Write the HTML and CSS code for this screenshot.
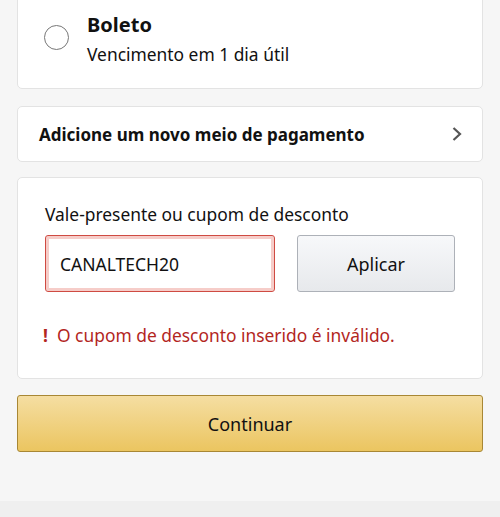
FILE: index.html
```html
<!DOCTYPE html>
<html lang="pt-BR">
<head>
<meta charset="utf-8">
<link rel="stylesheet" href="styles.css">
</head>
<body>
<div class="page">
  <div class="card card-option">
    <span class="radio"></span>
    <div class="option-text">
      <div class="option-title">Boleto</div>
      <div class="option-sub">Vencimento em 1 dia útil</div>
    </div>
  </div>

  <div class="card card-link">
    <span class="link-text">Adicione um novo meio de pagamento</span>
    <svg class="chevron" width="12" height="16" viewBox="0 0 12 16"><path d="M2.5 2 L9 8 L2.5 14" fill="none" stroke="#555" stroke-width="2.2"/></svg>
  </div>

  <div class="card card-coupon">
    <div class="coupon-label">Vale-presente ou cupom de desconto</div>
    <div class="coupon-row">
      <div class="coupon-input">CANALTECH20</div>
      <div class="btn-apply">Aplicar</div>
    </div>
    <div class="coupon-error"><span class="bang">!</span><span>O cupom de desconto inserido é inválido.</span></div>
  </div>

  <div class="btn-continue">Continuar</div>
</div>
<div class="footer-band"></div>
</body>
</html>
```

FILE: styles.css
```css
html, body {
  margin: 0;
  padding: 0;
  background: #f6f6f6;
  font-family: "Noto Sans", "Open Sans", sans-serif;
  color: #111;
}
.page {
  padding: 0 17px;
  height: 501px;
  overflow: hidden;
}
.card {
  background: #fff;
  border: 1px solid #e3e3e3;
  border-radius: 5px;
  box-sizing: border-box;
}
.card-option {
  margin-top: -20px;
  height: 109px;
  display: flex;
  align-items: center;
  padding: 20px 0 0 26px;
}
.radio {
  width: 25px;
  height: 25px;
  border: 1.5px solid #777;
  border-radius: 50%;
  box-sizing: border-box;
  flex: none;
  margin-top: -14px;
}
.option-text {
  margin-left: 18px;
  margin-top: -11px;
}
.option-title {
  font-size: 20px;
  font-weight: 700;
  line-height: 28px;
}
.option-sub {
  font-size: 17.4px;
  line-height: 26px;
  margin-top: 2px;
}
.card-link {
  margin-top: 17px;
  height: 56px;
  display: flex;
  align-items: center;
  justify-content: space-between;
  padding: 0 19px 0 21px;
}
.link-text {
  font-size: 17px;
  font-weight: 700;
}
.chevron { display: block; }
.card-coupon {
  margin-top: 15px;
  height: 202px;
  padding: 24px 27px 0 27px;
}
.coupon-label {
  font-size: 17.4px;
  line-height: 24px;
}
.coupon-row {
  display: flex;
  justify-content: space-between;
  margin-top: 9px;
}
.coupon-input {
  width: 230px;
  height: 57px;
  box-sizing: border-box;
  border: 1px solid #cf4b42;
  border-radius: 3px;
  box-shadow: inset 0 0 0 3px #f6cdc9;
  display: flex;
  align-items: center;
  padding-left: 14px;
  font-size: 17.5px;
}
.btn-apply {
  width: 158px;
  height: 57px;
  box-sizing: border-box;
  border: 1px solid #adb1b8;
  border-radius: 3px;
  background: linear-gradient(#f7f8fa, #e7e9ec);
  display: flex;
  align-items: center;
  justify-content: center;
  font-size: 18px;
}
.coupon-error {
  margin-top: 31px;
  color: #b3261e;
  font-size: 17.4px;
  line-height: 24px;
  display: flex;
  margin-left: -2px;
}
.bang {
  font-weight: 700;
  width: 14px;
}
.btn-continue {
  margin-top: 16px;
  height: 57px;
  box-sizing: border-box;
  border: 1px solid #a88734;
  border-radius: 3px;
  background: linear-gradient(#f5dea2, #ebc560);
  display: flex;
  align-items: center;
  justify-content: center;
  font-size: 18px;
}
.footer-band {
  height: 16px;
  background: #efefef;
}
```
